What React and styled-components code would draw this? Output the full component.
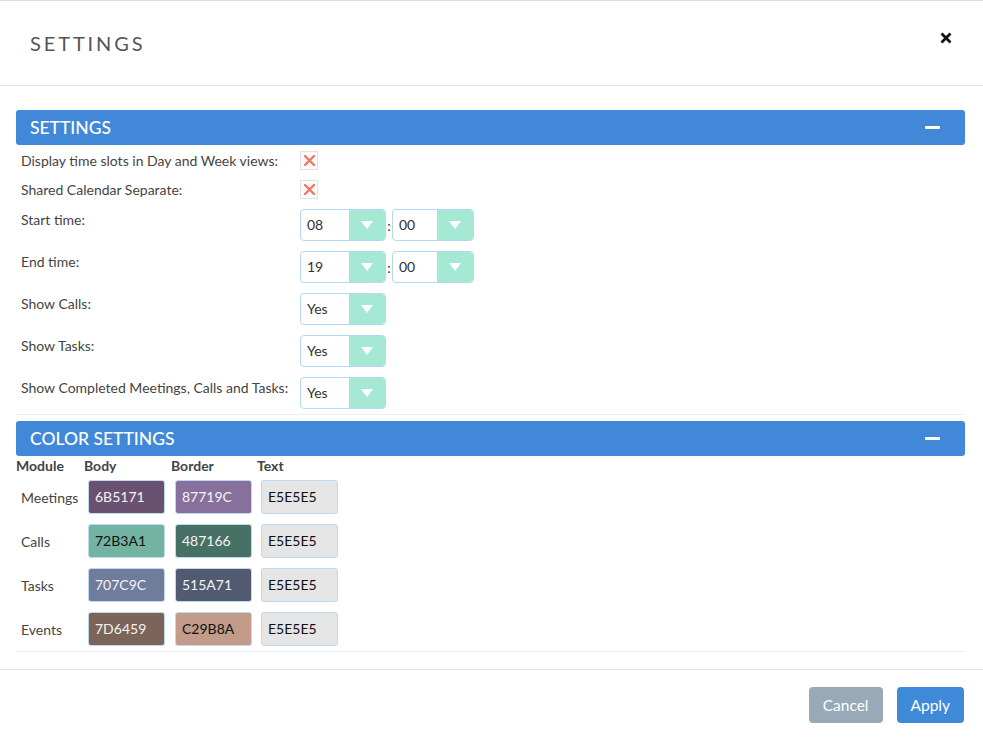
import React from 'react';
import styled, { createGlobalStyle } from 'styled-components';

const GlobalStyle = createGlobalStyle`
  body {
    margin: 0;
    background: #ffffff;
    font-family: Lato, 'Open Sans', sans-serif;
    color: #444;
  }
`;

const Modal = styled.div`
  width: 983px;
  min-height: 738px;
  border-top: 1px solid #dcdcdc;
  box-sizing: border-box;
  background: #fff;
`;

const Header = styled.div`
  height: 84px;
  border-bottom: 1px solid #e3e3e3;
  display: flex;
  align-items: center;
  justify-content: space-between;
  padding: 0 31px 0 30px;
`;

const Title = styled.h1`
  margin: 0;
  font-size: 20px;
  font-weight: 400;
  letter-spacing: 2.9px;
  color: #555;
`;

const Close = styled.button`
  border: 0;
  background: none;
  padding: 0;
  width: 12px;
  height: 12px;
  display: flex;
  cursor: pointer;
  margin-top: -10px;
`;

const Body = styled.div`
  padding: 24px 18px 17px 16px;
`;

const PanelHead = styled.div`
  display: flex;
  align-items: center;
  justify-content: space-between;
  height: 35px;
  background: #4189d8;
  border-radius: 3px;
  padding: 0 25px 0 14px;
  margin-top: ${p => (p.$first ? '0' : '6px')};
  color: #fff;
  font-size: 17.5px;
  font-weight: 500;
`;

const Minus = styled.span`
  width: 15px;
  height: 3px;
  background: #fff;
  border-radius: 1px;
`;

const Rows = styled.div`
  padding-top: 1px;
  border-bottom: 1px solid #eeeeee;
`;

const Row = styled.div`
  display: grid;
  grid-template-columns: 284px auto;
  align-items: start;
  padding: 5px 0;
`;

const Label = styled.div`
  padding-left: 5px;
  font-size: 14px;
  line-height: 19px;
  color: #444;
  margin-top: ${p => (p.$top ? '1px' : '0')};
`;

const Check = styled.span`
  width: 16px;
  height: 17px;
  border: 1px solid #e2e2e2;
  background: #fbfbfb;
  display: flex;
  align-items: center;
  justify-content: center;
`;

const TimeGroup = styled.div`
  display: flex;
  align-items: center;
`;

const Colon = styled.span`
  font-size: 14px;
  color: #333;
  width: 6px;
  text-align: center;
`;

const SelectBox = styled.div`
  display: flex;
  width: ${p => p.$w}px;
  height: 32px;
  box-sizing: border-box;
  border: 1px solid #b4d8f3;
  border-radius: 4px;
  overflow: hidden;
  background: #fff;
`;

const SelectValue = styled.span`
  flex: 1;
  padding-left: 6px;
  font-size: 14px;
  line-height: 30px;
  color: #333;
`;

const Arrow = styled.span`
  width: 36px;
  background: #a5e8d4;
  display: flex;
  align-items: center;
  justify-content: center;
  &::after {
    content: '';
    border-left: 6px solid transparent;
    border-right: 6px solid transparent;
    border-top: 8px solid #fff;
  }
`;

const ColorTable = styled.div`
  border-bottom: 1px solid #eeeeee;
`;

const ColorGrid = styled.div`
  display: grid;
  grid-template-columns: 68px 87px 86px 86px;
  align-items: center;
  padding: ${p => (p.$head ? '1px 0 0' : '5px 0')};
`;

const HeadCell = styled.div`
  font-size: 14px;
  font-weight: 700;
  line-height: 18px;
  color: #444;
`;

const ModuleName = styled.div`
  padding-left: 5px;
  font-size: 14px;
  color: #444;
`;

const Swatch = styled.div`
  margin-left: 4px;
  width: 77px;
  height: 34px;
  box-sizing: border-box;
  border: 1px solid #bcdaf2;
  border-radius: 3px;
  background: ${p => '#' + p.$bg};
  color: ${p => (p.$dark ? '#111' : '#f4f4f4')};
  font-size: 14px;
  line-height: 32px;
  padding-left: 6px;
`;

const Footer = styled.div`
  border-top: 1px solid #e3e3e3;
  display: flex;
  justify-content: flex-end;
  gap: 14px;
  padding: 17px 19px 15px;
`;

const Button = styled.button`
  height: 36px;
  padding: 0 14px;
  border: 0;
  border-radius: 4px;
  background: ${p => (p.$muted ? '#98a9b8' : '#3f89d9')};
  color: #fff;
  font-family: Lato, sans-serif;
  font-size: 15.5px;
  cursor: pointer;
`;

const Select = ({ value, w = 86 }) => (
  <SelectBox $w={w}>
    <SelectValue>{value}</SelectValue>
    <Arrow />
  </SelectBox>
);

const RedX = () => (
  <Check>
    <svg width="13" height="13" viewBox="0 0 13 13">
      <path d="M2 2 L11 11 M11 2 L2 11" stroke="#ec7765" strokeWidth="2.4" strokeLinecap="round" />
    </svg>
  </Check>
);

const colors = [
  { name: 'Meetings', body: '6B5171', border: '87719C' },
  { name: 'Calls', body: '72B3A1', border: '487166', bodyDark: true },
  { name: 'Tasks', body: '707C9C', border: '515A71' },
  { name: 'Events', body: '7D6459', border: 'C29B8A', borderDark: true },
];

export default function App() {
  return (
    <Modal>
      <GlobalStyle />
      <Header>
        <Title>SETTINGS</Title>
        <Close aria-label="close">
          <svg width="12" height="12" viewBox="0 0 12 12">
            <path d="M1.5 1.5 L10.5 10.5 M10.5 1.5 L1.5 10.5" stroke="#111" strokeWidth="2.8" />
          </svg>
        </Close>
      </Header>
      <Body>
        <PanelHead $first>
          <span>SETTINGS</span>
          <Minus />
        </PanelHead>
        <Rows>
          <Row>
            <Label>Display time slots in Day and Week views:</Label>
            <RedX />
          </Row>
          <Row>
            <Label>Shared Calendar Separate:</Label>
            <RedX />
          </Row>
          <Row>
            <Label $top>Start time:</Label>
            <TimeGroup>
              <Select value="08" w={86} />
              <Colon>:</Colon>
              <Select value="00" w={82} />
            </TimeGroup>
          </Row>
          <Row>
            <Label $top>End time:</Label>
            <TimeGroup>
              <Select value="19" w={86} />
              <Colon>:</Colon>
              <Select value="00" w={82} />
            </TimeGroup>
          </Row>
          <Row>
            <Label $top>Show Calls:</Label>
            <Select value="Yes" />
          </Row>
          <Row>
            <Label $top>Show Tasks:</Label>
            <Select value="Yes" />
          </Row>
          <Row>
            <Label $top>Show Completed Meetings, Calls and Tasks:</Label>
            <Select value="Yes" />
          </Row>
        </Rows>
        <PanelHead>
          <span>COLOR SETTINGS</span>
          <Minus />
        </PanelHead>
        <ColorTable>
          <ColorGrid $head>
            <HeadCell>Module</HeadCell>
            <HeadCell>Body</HeadCell>
            <HeadCell>Border</HeadCell>
            <HeadCell>Text</HeadCell>
          </ColorGrid>
          {colors.map(c => (
            <ColorGrid key={c.name}>
              <ModuleName>{c.name}</ModuleName>
              <Swatch $bg={c.body} $dark={c.bodyDark}>{c.body}</Swatch>
              <Swatch $bg={c.border} $dark={c.borderDark}>{c.border}</Swatch>
              <Swatch $bg="E5E5E5" $dark>E5E5E5</Swatch>
            </ColorGrid>
          ))}
        </ColorTable>
      </Body>
      <Footer>
        <Button $muted>Cancel</Button>
        <Button>Apply</Button>
      </Footer>
    </Modal>
  );
}
